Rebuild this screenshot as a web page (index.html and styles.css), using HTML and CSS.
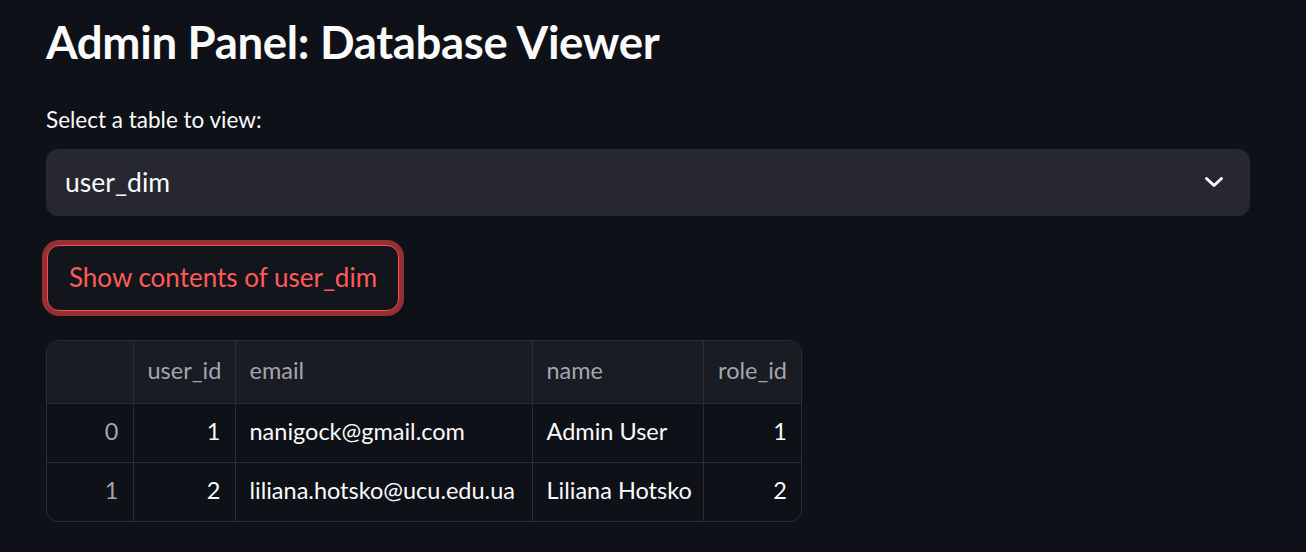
FILE: index.html
```html
<!DOCTYPE html>
<html>
<head>
<meta charset="utf-8">
<link rel="stylesheet" href="styles.css">
</head>
<body>
<main class="app">
  <h1 class="title">Admin Panel: Database Viewer</h1>
  <label class="label">Select a table to view:</label>
  <div class="select">
    <span class="select-value">user_dim</span>
    <svg class="chevron" width="20" height="12" viewBox="0 0 20 12"><path d="M2.5 2.5 L10 9.5 L17.5 2.5" fill="none" stroke="#fafafa" stroke-width="3" stroke-linecap="round" stroke-linejoin="round"/></svg>
  </div>
  <button class="btn">Show contents of user_dim</button>
  <div class="table-wrap">
    <table class="df">
      <colgroup><col class="c-idx"><col class="c-uid"><col class="c-email"><col class="c-name"><col class="c-role"></colgroup>
      <thead>
        <tr><th></th><th class="num">user_id</th><th>email</th><th>name</th><th class="num">role_id</th></tr>
      </thead>
      <tbody>
        <tr><td class="idx num">0</td><td class="num">1</td><td>nanigock@gmail.com</td><td>Admin User</td><td class="num">1</td></tr>
        <tr><td class="idx num">1</td><td class="num">2</td><td>liliana.hotsko@ucu.edu.ua</td><td>Liliana Hotsko</td><td class="num">2</td></tr>
      </tbody>
    </table>
  </div>
</main>
</body>
</html>
```
FILE: styles.css
```css
html, body {
  margin: 0;
  padding: 0;
  background: #0e1117;
}
body {
  font-family: "Lato", "Noto Sans", sans-serif;
  color: #fafafa;
}
.app {
  padding: 14px 56px 0 46px;
  display: flex;
  flex-direction: column;
  align-items: stretch;
}
.title {
  margin: 0;
  font-size: 45.6px;
  font-weight: 700;
  line-height: 55px;
  letter-spacing: -0.35px;
}
.label {
  display: block;
  margin-top: 38px;
  font-size: 22.5px;
  line-height: 26px;
}
.select {
  margin-top: 16px;
  height: 67px;
  background: #262730;
  border-radius: 12px;
  display: flex;
  align-items: center;
  justify-content: space-between;
  padding: 0 26px 2px 19px;
  box-sizing: border-box;
}
.select-value {
  font-size: 26.5px;
}
.chevron {
  display: block;
}
.btn {
  align-self: flex-start;
  margin: 29px 0 0 1px;
  height: 66px;
  width: 352px;
  box-sizing: border-box;
  background: #13151c;
  border: 1px solid #ff4b4b;
  border-radius: 12px;
  box-shadow: 0 0 0 5px rgba(255, 75, 75, 0.55);
  color: #ff5a57;
  font-family: inherit;
  font-size: 26px;
  padding: 0 10px 2px;
  text-align: center;
}
.table-wrap {
  margin-top: 29px;
  align-self: flex-start;
  border: 1px solid #2a2c34;
  border-radius: 12px;
  overflow: hidden;
}
.df {
  border-collapse: collapse;
  font-size: 23.5px;
  table-layout: fixed;
  width: 754px;
}
.df th, .df td {
  border: 1px solid #2a2c34;
  height: 59px;
  padding: 0 14px 3px;
  box-sizing: border-box;
  text-align: left;
  font-weight: 400;
  white-space: nowrap;
}
.df tr:first-child th { border-top: none; }
.df tr:last-child td { border-bottom: none; }
.df th:first-child, .df td:first-child { border-left: none; }
.df th:last-child, .df td:last-child { border-right: none; }
.df thead th {
  background: #1a1c23;
  color: #a3a6ae;
  height: 62px;
}
.df .num { text-align: right; }
.df td.idx { color: #a3a6ae; }
.c-idx { width: 86px; }
.c-uid { width: 102px; }
.c-email { width: 297px; }
.c-name { width: 171px; }
.c-role { width: 98px; }
```
